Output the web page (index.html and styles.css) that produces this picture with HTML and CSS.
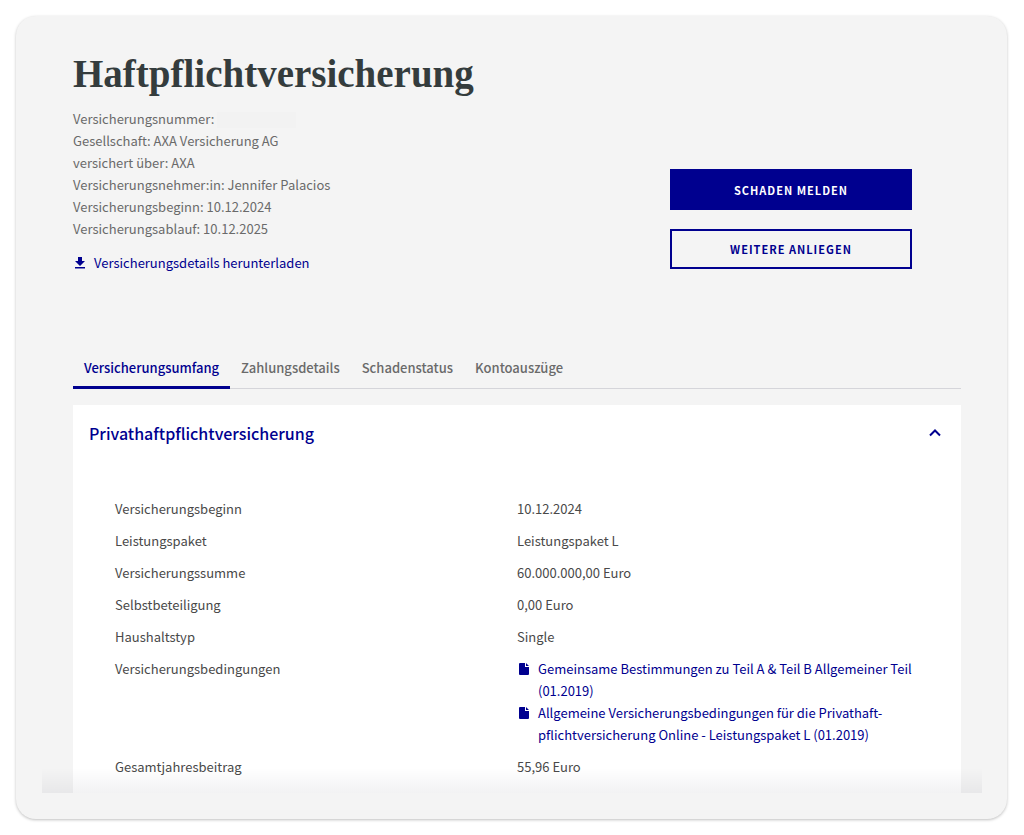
FILE: index.html
```html
<!DOCTYPE html>
<html lang="de">
<head>
  <meta charset="UTF-8">
  <meta name="viewport" content="width=device-width, initial-scale=1.0">
  <title>Haftpflichtversicherung</title>
  <link rel="stylesheet" href="styles.css">
</head>
<body>
<main class="contract">
  <header class="contract-header">
    <div class="contract-info">
      <h1>Haftpflichtversicherung</h1>
      <ul class="facts">
        <li>Versicherungsnummer: <span class="redacted"></span></li>
        <li>Gesellschaft: AXA Versicherung AG</li>
        <li>versichert über: AXA</li>
        <li>Versicherungsnehmer:in: Jennifer Palacios</li>
        <li>Versicherungsbeginn: 10.12.2024</li>
        <li>Versicherungsablauf: 10.12.2025</li>
      </ul>
      <a class="icon-link download" href="#">
        <svg class="icon-download" viewBox="0 0 14 14" aria-hidden="true">
          <path d="M5 1h4v4h3L7 10 2 5h3zM2 11h10v1.500H2z"/>
        </svg>
        <span>Versicherungsdetails herunterladen</span>
      </a>
    </div>
    <div class="actions">
      <button class="btn btn-primary">Schaden melden</button>
      <button class="btn btn-secondary">Weitere Anliegen</button>
    </div>
  </header>

  <nav class="tabs">
    <a class="tab active" href="#umfang">Versicherungsumfang</a>
    <a class="tab" href="#zahlung">Zahlungsdetails</a>
    <a class="tab" href="#schaden">Schadenstatus</a>
    <a class="tab" href="#konto">Kontoauszüge</a>
  </nav>

  <section class="panel" id="umfang">
    <button class="panel-toggle" aria-expanded="true">
      <span>Privathaftpflichtversicherung</span>
      <svg class="chevron" viewBox="0 0 14 14" aria-hidden="true">
        <path d="M2 9.500 7 4.500l5 5"/>
      </svg>
    </button>
    <table class="details">
      <tr><th scope="row">Versicherungsbeginn</th><td>10.12.2024</td></tr>
      <tr><th scope="row">Leistungspaket</th><td>Leistungspaket L</td></tr>
      <tr><th scope="row">Versicherungssumme</th><td>60.000.000,00 Euro</td></tr>
      <tr><th scope="row">Selbstbeteiligung</th><td>0,00 Euro</td></tr>
      <tr><th scope="row">Haushaltstyp</th><td>Single</td></tr>
      <tr>
        <th scope="row">Versicherungsbedingungen</th>
        <td>
          <a class="icon-link" href="#">
            <svg class="icon-file" viewBox="0 0 12 14" aria-hidden="true">
              <path d="M2 1h5v4h4V12a1 1 0 0 1-1 1H2a1 1 0 0 1-1-1V2a1 1 0 0 1 1-1zM8 1l3 3H8z"/>
            </svg>
            <span>Gemeinsame Bestimmungen zu Teil A &amp; Teil B Allgemeiner Teil (01.2019)</span>
          </a>
          <a class="icon-link" href="#">
            <svg class="icon-file" viewBox="0 0 12 14" aria-hidden="true">
              <path d="M2 1h5v4h4V12a1 1 0 0 1-1 1H2a1 1 0 0 1-1-1V2a1 1 0 0 1 1-1zM8 1l3 3H8z"/>
            </svg>
            <span>Allgemeine Versicherungsbedingungen für die Privathaft-<wbr>pflichtversicherung Online - Leistungspaket L (01.2019)</span>
          </a>
        </td>
      </tr>
      <tr><th scope="row">Gesamtjahresbeitrag</th><td>55,96 Euro</td></tr>
    </table>
  </section>
  <div class="fade"></div>
</main>
</body>
</html>
```
FILE: styles.css
```css
* {
  box-sizing: border-box;
}
body {
  margin: 0;
  padding: 16px 17px 16px 16px;
  background: #fff;
  color: #494949;
  font-family: "Noto Sans CJK JP", "Open Sans", sans-serif;
  font-size: 13px;
  line-height: 22px;
}
a {
  color: #00008f;
  text-decoration: none;
}
button {
  font-family: inherit;
  cursor: pointer;
}
.contract {
  position: relative;
  padding: 34px 46px 26px 57px;
  background: #f4f4f4;
  border-radius: 20px;
  box-shadow: 0 1px 3px rgba(0, 0, 0, 0.25);
}
.contract-header {
  display: flex;
  justify-content: space-between;
}
h1 {
  margin: 0 0 10px;
  color: #343c3d;
  font-family: "Liberation Serif", serif;
  font-size: 39px;
  line-height: 48px;
}
.facts {
  margin: 0 0 12px;
  padding: 0;
  list-style: none;
  color: #6a6a6a;
}
.redacted {
  display: inline-block;
  width: 79px;
  height: 16px;
  background: #f2f2f2;
  vertical-align: text-bottom;
}
.icon-link {
  display: flex;
}
.icon-link svg {
  flex: none;
  height: 14px;
  margin-top: 4px;
  fill: #00008f;
}
.icon-download {
  width: 14px;
  margin-right: 7px;
}
.icon-file {
  width: 12px;
  margin-left: 1px;
  margin-right: 8px;
}
.actions {
  display: flex;
  flex-direction: column;
  gap: 19px;
  width: 242px;
  margin-top: 119px;
  margin-right: 49px;
}
.btn {
  height: 41px;
  border: 2px solid #00008f;
  font-size: 11px;
  font-weight: 700;
  letter-spacing: 1px;
  text-transform: uppercase;
}
.btn-primary {
  background: #00008f;
  color: #fff;
}
.btn-secondary {
  height: 40px;
  background: transparent;
  color: #00008f;
}
.tabs {
  display: flex;
  margin-top: 77px;
  border-bottom: 1px solid #d5d5da;
}
.tab {
  margin-bottom: -1px;
  padding: 6px 11px 7px;
  border-bottom: 3px solid transparent;
  color: #6a6a6a;
  font-weight: 500;
}
.tab.active {
  border-color: #00008f;
  color: #00008f;
}
.panel {
  margin-top: 16px;
  background: #fff;
}
.panel-toggle {
  display: flex;
  justify-content: space-between;
  align-items: center;
  width: 100%;
  padding: 16px 19px 16px 16px;
  border: 0;
  background: none;
  color: #00008f;
  font-size: 16px;
  font-weight: 500;
  line-height: 24px;
}
.chevron {
  width: 14px;
  height: 14px;
  fill: none;
  stroke: #00008f;
  stroke-width: 2;
}
.details {
  width: 100%;
  padding: 32px 42px 10px;
  border-spacing: 0;
  table-layout: fixed;
}
.details th,
.details td {
  padding: 5px 0;
  font-weight: 400;
  text-align: left;
  vertical-align: top;
}
/* bottom scroll shade, runs a little past the panel on both sides */
.fade {
  position: absolute;
  left: 26px;
  right: 25px;
  bottom: 26px;
  height: 25px;
  background: linear-gradient(rgba(0, 0, 30, 0), rgba(0, 0, 30, 0.05));
}
```
